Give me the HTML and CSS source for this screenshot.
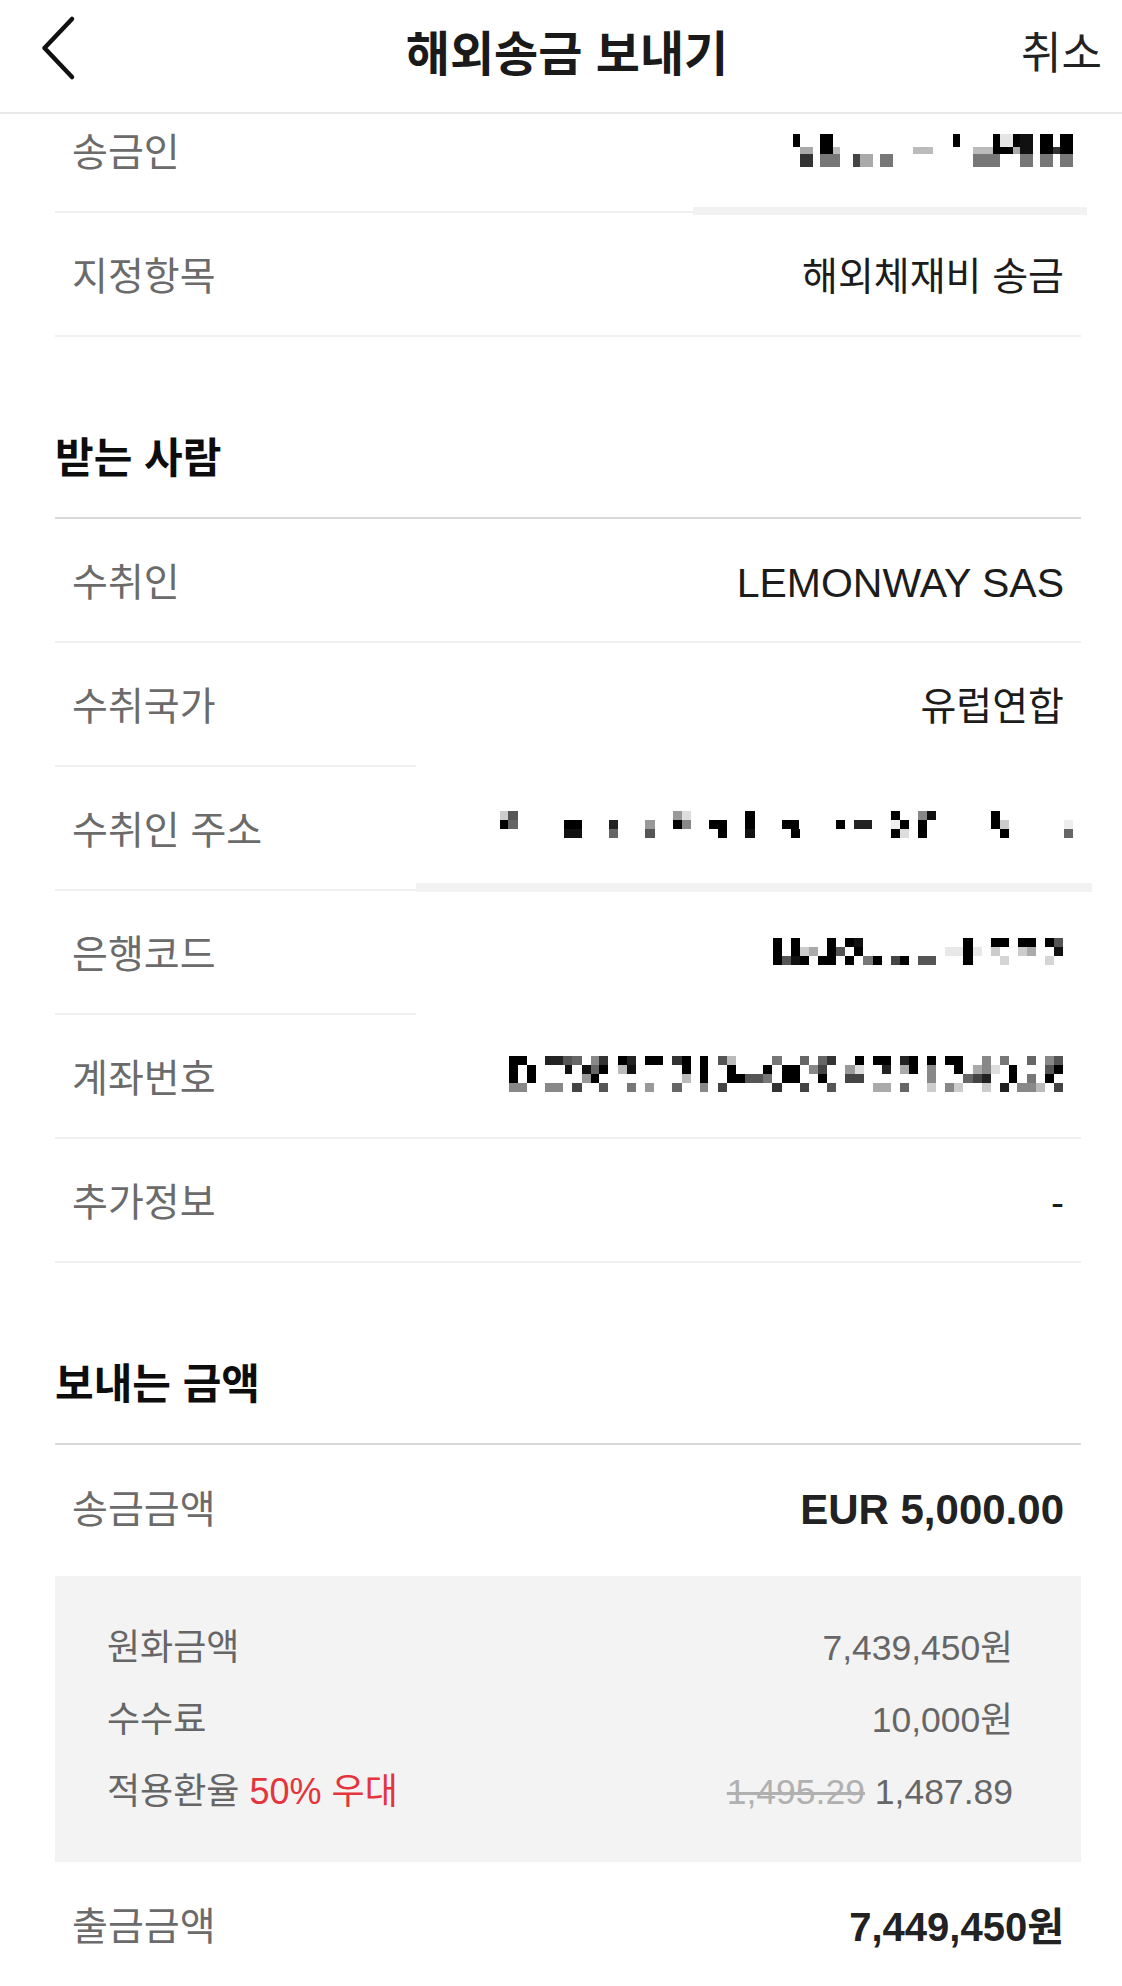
FILE: index.html
```html
<!DOCTYPE html>
<html lang="ko">
<head>
<meta charset="utf-8">
<title>해외송금 보내기</title>
<link rel="stylesheet" href="styles.css">
</head>
<body>
<header class="topbar">
  <div class="topbar-left">
    <svg class="back" width="60" height="100" viewBox="0 0 60 100" aria-label="뒤로">
      <path d="M52 19 L24.5 48 L52 77" fill="none" stroke="#111" stroke-width="4.5" stroke-linecap="round" stroke-linejoin="round"/>
    </svg>
  </div>
  <h1 class="topbar-title">해외송금 보내기</h1>
  <div class="topbar-right"><span class="cancel">취소</span></div>
</header>

<main class="content">
  <div class="list">
    <div class="row">
      <span class="label">송금인</span>
      <svg class="mosaic mosaic--sender" width="400" height="126" viewBox="690 89 400 126" shape-rendering="crispEdges">
        <rect x="693" y="207" width="394" height="8" fill="#f2f2f2"/>
        <rect x="793" y="134" width="7" height="13" fill="#000"/>
        <rect x="820" y="134" width="13" height="13" fill="#000"/>
        <rect x="953" y="134" width="7" height="13" fill="#000"/>
        <rect x="993" y="134" width="7" height="13" fill="#000"/>
        <rect x="1000" y="134" width="13" height="13" fill="#e5e5e5"/>
        <rect x="1013" y="134" width="7" height="13" fill="#000"/>
        <rect x="1020" y="134" width="13" height="13" fill="#111"/>
        <rect x="1040" y="134" width="13" height="13" fill="#000"/>
        <rect x="1060" y="134" width="13" height="13" fill="#000"/>
        <rect x="800" y="147" width="13" height="7" fill="#aaa"/>
        <rect x="820" y="147" width="13" height="7" fill="#000"/>
        <rect x="833" y="147" width="7" height="7" fill="#bbb"/>
        <rect x="913" y="147" width="20" height="7" fill="#bbb"/>
        <rect x="973" y="147" width="20" height="7" fill="#bbb"/>
        <rect x="993" y="147" width="20" height="7" fill="#000"/>
        <rect x="1013" y="147" width="7" height="7" fill="#aaa"/>
        <rect x="1020" y="147" width="13" height="7" fill="#111"/>
        <rect x="1040" y="147" width="13" height="7" fill="#000"/>
        <rect x="1053" y="147" width="7" height="7" fill="#333"/>
        <rect x="1060" y="147" width="13" height="7" fill="#000"/>
        <rect x="800" y="154" width="13" height="13" fill="#333"/>
        <rect x="820" y="154" width="20" height="13" fill="#777"/>
        <rect x="853" y="154" width="7" height="13" fill="#444"/>
        <rect x="860" y="154" width="13" height="13" fill="#aaa"/>
        <rect x="880" y="154" width="13" height="13" fill="#777"/>
        <rect x="973" y="154" width="27" height="13" fill="#777"/>
        <rect x="1020" y="154" width="13" height="13" fill="#777"/>
        <rect x="1040" y="154" width="13" height="13" fill="#777"/>
        <rect x="1060" y="154" width="13" height="13" fill="#777"/>
      </svg>
    </div>
    <div class="row">
      <span class="label">지정항목</span>
      <span class="value">해외체재비 송금</span>
    </div>

    <h2 class="section-title">받는 사람</h2>

    <div class="row">
      <span class="label">수취인</span>
      <span class="value value--latin">LEMONWAY SAS</span>
    </div>
    <div class="row row--partial">
      <span class="label">수취국가</span>
      <span class="value">유럽연합</span>
    </div>
    <div class="row row--partial">
      <span class="label">수취인 주소</span>
      <svg class="mosaic mosaic--address" width="682" height="126" viewBox="410 767 682 126" shape-rendering="crispEdges">
        <rect x="416" y="883" width="676" height="9" fill="#f2f2f2"/>
        <rect x="500" y="811" width="8" height="9" fill="#ccc"/>
        <rect x="508" y="811" width="10" height="9" fill="#555"/>
        <rect x="673" y="811" width="9" height="9" fill="#999"/>
        <rect x="682" y="811" width="9" height="9" fill="#ddd"/>
        <rect x="745" y="811" width="10" height="9" fill="#000"/>
        <rect x="891" y="811" width="9" height="9" fill="#000"/>
        <rect x="918" y="811" width="9" height="9" fill="#888"/>
        <rect x="927" y="811" width="9" height="9" fill="#111"/>
        <rect x="991" y="811" width="9" height="9" fill="#000"/>
        <rect x="500" y="820" width="8" height="9" fill="#000"/>
        <rect x="508" y="820" width="10" height="9" fill="#666"/>
        <rect x="564" y="820" width="18" height="9" fill="#000"/>
        <rect x="609" y="820" width="9" height="9" fill="#222"/>
        <rect x="645" y="820" width="10" height="9" fill="#999"/>
        <rect x="673" y="820" width="9" height="9" fill="#000"/>
        <rect x="682" y="820" width="9" height="9" fill="#888"/>
        <rect x="709" y="820" width="18" height="9" fill="#000"/>
        <rect x="745" y="820" width="10" height="9" fill="#000"/>
        <rect x="782" y="820" width="17" height="9" fill="#000"/>
        <rect x="836" y="820" width="9" height="9" fill="#000"/>
        <rect x="854" y="820" width="18" height="9" fill="#222"/>
        <rect x="891" y="820" width="9" height="9" fill="#eee"/>
        <rect x="900" y="820" width="9" height="9" fill="#000"/>
        <rect x="918" y="820" width="9" height="9" fill="#000"/>
        <rect x="991" y="820" width="9" height="9" fill="#000"/>
        <rect x="1000" y="820" width="9" height="9" fill="#ccc"/>
        <rect x="1064" y="820" width="9" height="9" fill="#eee"/>
        <rect x="564" y="829" width="18" height="9" fill="#111"/>
        <rect x="609" y="829" width="9" height="9" fill="#666"/>
        <rect x="645" y="829" width="10" height="9" fill="#555"/>
        <rect x="718" y="829" width="9" height="9" fill="#000"/>
        <rect x="745" y="829" width="10" height="9" fill="#111"/>
        <rect x="791" y="829" width="9" height="9" fill="#000"/>
        <rect x="891" y="829" width="9" height="9" fill="#000"/>
        <rect x="900" y="829" width="9" height="9" fill="#ddd"/>
        <rect x="918" y="829" width="9" height="9" fill="#000"/>
        <rect x="1000" y="829" width="9" height="9" fill="#000"/>
        <rect x="1064" y="829" width="9" height="9" fill="#666"/>
      </svg>
    </div>
    <div class="row row--partial">
      <span class="label">은행코드</span>
      <svg class="mosaic mosaic--bank" width="321" height="124" viewBox="760 891 321 124" shape-rendering="crispEdges">
        <rect x="773" y="938" width="9" height="9" fill="#000"/>
        <rect x="791" y="938" width="9" height="9" fill="#000"/>
        <rect x="827" y="938" width="9" height="9" fill="#000"/>
        <rect x="845" y="938" width="9" height="9" fill="#000"/>
        <rect x="854" y="938" width="9" height="9" fill="#111"/>
        <rect x="963" y="938" width="10" height="9" fill="#000"/>
        <rect x="991" y="938" width="18" height="9" fill="#000"/>
        <rect x="1018" y="938" width="18" height="9" fill="#000"/>
        <rect x="1045" y="938" width="9" height="9" fill="#000"/>
        <rect x="1054" y="938" width="9" height="9" fill="#555"/>
        <rect x="773" y="947" width="9" height="9" fill="#000"/>
        <rect x="791" y="947" width="9" height="9" fill="#000"/>
        <rect x="800" y="947" width="9" height="9" fill="#ccc"/>
        <rect x="809" y="947" width="9" height="9" fill="#aaa"/>
        <rect x="827" y="947" width="9" height="9" fill="#000"/>
        <rect x="836" y="947" width="9" height="9" fill="#555"/>
        <rect x="854" y="947" width="9" height="9" fill="#000"/>
        <rect x="945" y="947" width="18" height="9" fill="#e8e8e8"/>
        <rect x="963" y="947" width="10" height="9" fill="#000"/>
        <rect x="973" y="947" width="9" height="9" fill="#e8e8e8"/>
        <rect x="991" y="947" width="9" height="9" fill="#ccc"/>
        <rect x="1018" y="947" width="9" height="9" fill="#ccc"/>
        <rect x="1027" y="947" width="9" height="9" fill="#aaa"/>
        <rect x="1054" y="947" width="9" height="9" fill="#111"/>
        <rect x="773" y="956" width="9" height="9" fill="#000"/>
        <rect x="782" y="956" width="9" height="9" fill="#555"/>
        <rect x="791" y="956" width="9" height="9" fill="#111"/>
        <rect x="800" y="956" width="9" height="9" fill="#000"/>
        <rect x="818" y="956" width="18" height="9" fill="#000"/>
        <rect x="845" y="956" width="9" height="9" fill="#000"/>
        <rect x="863" y="956" width="10" height="9" fill="#777"/>
        <rect x="873" y="956" width="9" height="9" fill="#000"/>
        <rect x="891" y="956" width="9" height="9" fill="#444"/>
        <rect x="900" y="956" width="9" height="9" fill="#000"/>
        <rect x="918" y="956" width="18" height="9" fill="#555"/>
        <rect x="963" y="956" width="10" height="9" fill="#000"/>
        <rect x="1000" y="956" width="9" height="9" fill="#d5d5d5"/>
        <rect x="1045" y="956" width="9" height="9" fill="#d5d5d5"/>
      </svg>
    </div>
    <div class="row">
      <span class="label">계좌번호</span>
      <svg class="mosaic mosaic--account" width="581" height="124" viewBox="500 1015 581 124" shape-rendering="crispEdges">
        <rect x="509" y="1056" width="18" height="9" fill="#000"/>
        <rect x="545" y="1056" width="18" height="9" fill="#222"/>
        <rect x="563" y="1056" width="9" height="9" fill="#555"/>
        <rect x="572" y="1056" width="10" height="9" fill="#666"/>
        <rect x="591" y="1056" width="8" height="9" fill="#888"/>
        <rect x="599" y="1056" width="9" height="9" fill="#333"/>
        <rect x="618" y="1056" width="9" height="9" fill="#000"/>
        <rect x="627" y="1056" width="9" height="9" fill="#222"/>
        <rect x="645" y="1056" width="18" height="9" fill="#000"/>
        <rect x="672" y="1056" width="10" height="9" fill="#333"/>
        <rect x="682" y="1056" width="9" height="9" fill="#000"/>
        <rect x="700" y="1056" width="8" height="9" fill="#000"/>
        <rect x="718" y="1056" width="9" height="9" fill="#555"/>
        <rect x="727" y="1056" width="9" height="9" fill="#bbb"/>
        <rect x="772" y="1056" width="10" height="9" fill="#777"/>
        <rect x="800" y="1056" width="9" height="9" fill="#666"/>
        <rect x="818" y="1056" width="9" height="9" fill="#666"/>
        <rect x="827" y="1056" width="9" height="9" fill="#333"/>
        <rect x="855" y="1056" width="9" height="9" fill="#000"/>
        <rect x="873" y="1056" width="18" height="9" fill="#000"/>
        <rect x="900" y="1056" width="9" height="9" fill="#222"/>
        <rect x="909" y="1056" width="9" height="9" fill="#000"/>
        <rect x="927" y="1056" width="9" height="9" fill="#000"/>
        <rect x="945" y="1056" width="18" height="9" fill="#000"/>
        <rect x="982" y="1056" width="9" height="9" fill="#888"/>
        <rect x="1000" y="1056" width="9" height="9" fill="#777"/>
        <rect x="1027" y="1056" width="9" height="9" fill="#666"/>
        <rect x="1045" y="1056" width="9" height="9" fill="#888"/>
        <rect x="1054" y="1056" width="9" height="9" fill="#555"/>
        <rect x="509" y="1065" width="9" height="9" fill="#000"/>
        <rect x="527" y="1065" width="9" height="9" fill="#000"/>
        <rect x="565" y="1065" width="7" height="9" fill="#111"/>
        <rect x="582" y="1065" width="9" height="9" fill="#111"/>
        <rect x="591" y="1065" width="8" height="9" fill="#666"/>
        <rect x="599" y="1065" width="9" height="9" fill="#000"/>
        <rect x="618" y="1065" width="9" height="9" fill="#bbb"/>
        <rect x="627" y="1065" width="9" height="9" fill="#111"/>
        <rect x="682" y="1065" width="9" height="9" fill="#000"/>
        <rect x="700" y="1065" width="8" height="9" fill="#000"/>
        <rect x="727" y="1065" width="9" height="9" fill="#000"/>
        <rect x="763" y="1065" width="9" height="9" fill="#000"/>
        <rect x="782" y="1065" width="18" height="9" fill="#000"/>
        <rect x="809" y="1065" width="9" height="9" fill="#888"/>
        <rect x="818" y="1065" width="9" height="9" fill="#444"/>
        <rect x="845" y="1065" width="10" height="9" fill="#999"/>
        <rect x="855" y="1065" width="9" height="9" fill="#ddd"/>
        <rect x="882" y="1065" width="9" height="9" fill="#222"/>
        <rect x="900" y="1065" width="9" height="9" fill="#aaa"/>
        <rect x="909" y="1065" width="9" height="9" fill="#000"/>
        <rect x="927" y="1065" width="9" height="9" fill="#888"/>
        <rect x="954" y="1065" width="9" height="9" fill="#000"/>
        <rect x="973" y="1065" width="9" height="9" fill="#aaa"/>
        <rect x="982" y="1065" width="9" height="9" fill="#888"/>
        <rect x="991" y="1065" width="9" height="9" fill="#ddd"/>
        <rect x="1009" y="1065" width="8" height="9" fill="#000"/>
        <rect x="1045" y="1065" width="9" height="9" fill="#555"/>
        <rect x="1054" y="1065" width="9" height="9" fill="#000"/>
        <rect x="509" y="1074" width="9" height="9" fill="#000"/>
        <rect x="527" y="1074" width="9" height="9" fill="#000"/>
        <rect x="582" y="1074" width="9" height="9" fill="#999"/>
        <rect x="591" y="1074" width="8" height="9" fill="#000"/>
        <rect x="682" y="1074" width="9" height="9" fill="#bbb"/>
        <rect x="700" y="1074" width="8" height="9" fill="#000"/>
        <rect x="727" y="1074" width="18" height="9" fill="#000"/>
        <rect x="745" y="1074" width="18" height="9" fill="#555"/>
        <rect x="763" y="1074" width="9" height="9" fill="#777"/>
        <rect x="782" y="1074" width="18" height="9" fill="#000"/>
        <rect x="818" y="1074" width="9" height="9" fill="#000"/>
        <rect x="845" y="1074" width="19" height="9" fill="#444"/>
        <rect x="927" y="1074" width="9" height="9" fill="#888"/>
        <rect x="963" y="1074" width="10" height="9" fill="#666"/>
        <rect x="973" y="1074" width="9" height="9" fill="#444"/>
        <rect x="982" y="1074" width="9" height="9" fill="#222"/>
        <rect x="1009" y="1074" width="8" height="9" fill="#000"/>
        <rect x="1027" y="1074" width="9" height="9" fill="#777"/>
        <rect x="1045" y="1074" width="9" height="9" fill="#000"/>
        <rect x="509" y="1083" width="18" height="9" fill="#888"/>
        <rect x="545" y="1083" width="18" height="9" fill="#888"/>
        <rect x="572" y="1083" width="10" height="9" fill="#444"/>
        <rect x="599" y="1083" width="9" height="9" fill="#555"/>
        <rect x="627" y="1083" width="9" height="9" fill="#777"/>
        <rect x="645" y="1083" width="9" height="9" fill="#999"/>
        <rect x="672" y="1083" width="10" height="9" fill="#666"/>
        <rect x="700" y="1083" width="8" height="9" fill="#888"/>
        <rect x="718" y="1083" width="9" height="9" fill="#444"/>
        <rect x="772" y="1083" width="10" height="9" fill="#333"/>
        <rect x="800" y="1083" width="9" height="9" fill="#444"/>
        <rect x="827" y="1083" width="9" height="9" fill="#555"/>
        <rect x="873" y="1083" width="18" height="9" fill="#aaa"/>
        <rect x="900" y="1083" width="9" height="9" fill="#666"/>
        <rect x="927" y="1083" width="9" height="9" fill="#ccc"/>
        <rect x="945" y="1083" width="9" height="9" fill="#888"/>
        <rect x="954" y="1083" width="9" height="9" fill="#ccc"/>
        <rect x="982" y="1083" width="9" height="9" fill="#ccc"/>
        <rect x="1000" y="1083" width="9" height="9" fill="#222"/>
        <rect x="1017" y="1083" width="19" height="9" fill="#888"/>
        <rect x="1036" y="1083" width="9" height="9" fill="#bbb"/>
        <rect x="1054" y="1083" width="9" height="9" fill="#444"/>
      </svg>
    </div>
    <div class="row">
      <span class="label">추가정보</span>
      <span class="value">-</span>
    </div>

    <h2 class="section-title">보내는 금액</h2>

    <div class="row row--plain">
      <span class="label">송금금액</span>
      <span class="value value--amount">EUR 5,000.00</span>
    </div>

    <div class="breakdown">
      <div class="bd-row">
        <span class="bd-label">원화금액</span>
        <span class="bd-value">7,439,450원</span>
      </div>
      <div class="bd-row">
        <span class="bd-label">수수료</span>
        <span class="bd-value">10,000원</span>
      </div>
      <div class="bd-row">
        <span class="bd-label">적용환율 <em class="promo">50% 우대</em></span>
        <span class="bd-value"><s class="old-rate">1,495.29</s> 1,487.89</span>
      </div>
    </div>

    <div class="row row--plain">
      <span class="label">출금금액</span>
      <span class="value value--total">7,449,450원</span>
    </div>
  </div>
</main>
</body>
</html>
```

FILE: styles.css
```css
* {
  box-sizing: border-box;
  margin: 0;
  padding: 0;
}

body {
  width: 1122px;
  background: #ffffff;
  font-family: "Liberation Sans", "Noto Sans CJK KR", sans-serif;
  color: #1a1a1a;
}

.topbar {
  display: grid;
  grid-template-columns: 1fr auto 1fr;
  align-items: center;
  height: 114px;
  padding-bottom: 12px;
  border-bottom: 2px solid #e8e8e8;
  background: #ffffff;
}

.topbar-left {
  display: flex;
  align-items: center;
}

.back {
  display: block;
  margin-left: 20px;
}

.topbar-title {
  font-family: "Noto Sans CJK KR", sans-serif;
  font-weight: 700;
  font-size: 48px;
  line-height: 60px;
  color: #1a1a1a;
  padding-left: 12px;
  white-space: nowrap;
}

.topbar-right {
  display: flex;
  justify-content: flex-end;
  padding-right: 20px;
}

.cancel {
  font-family: "Noto Sans CJK KR", sans-serif;
  font-size: 44px;
  line-height: 56px;
  color: #222222;
}

.content {
  overflow: hidden;
  padding: 0 41px 0 55px;
}

.list {
  margin-top: -25px;
}

.row {
  display: flex;
  align-items: center;
  height: 124px;
  border-bottom: 2px solid #f0f0f0;
}

.row--partial {
  border-bottom-color: transparent;
  background-image: linear-gradient(#f0f0f0, #f0f0f0);
  background-repeat: no-repeat;
  background-origin: border-box;
  background-position: left bottom;
  background-size: 361px 2px;
}

.row--plain {
  border-bottom: none;
}

.label {
  padding-left: 17px;
  padding-top: 5px;
  font-size: 39px;
  line-height: 46px;
  color: #6b6b6b;
  white-space: nowrap;
}

.value {
  margin-left: auto;
  padding-right: 17px;
  padding-top: 5px;
  font-size: 39px;
  line-height: 46px;
  color: #1c1c1c;
  white-space: nowrap;
}

.value--latin {
  font-size: 41px;
}

.value--amount {
  font-weight: 700;
  font-size: 42px;
  color: #222222;
}

.value--total {
  font-weight: 700;
  font-size: 40px;
  color: #222222;
}

.mosaic {
  display: block;
  align-self: flex-start;
  margin-left: auto;
  flex: none;
}

.mosaic--sender {
  margin-right: -9px;
}

.mosaic--address {
  margin-right: -11px;
}

.section-title {
  height: 182px;
  padding-top: 96px;
  border-bottom: 2px solid #d9d9d9;
  font-family: "Noto Sans CJK KR", sans-serif;
  font-weight: 700;
  font-size: 42px;
  line-height: 44px;
  color: #0d0d0d;
}

.breakdown {
  margin-top: 7px;
  padding: 34px 68px 36px 52px;
  background: #f3f3f3;
}

.bd-row {
  display: flex;
  align-items: center;
  justify-content: space-between;
  height: 72px;
}

.bd-label {
  padding-top: 4px;
  font-size: 36px;
  line-height: 44px;
  color: #666666;
  white-space: nowrap;
}

.promo {
  font-style: normal;
  color: #e5343b;
}

.bd-value {
  padding-top: 4px;
  font-size: 35.5px;
  line-height: 44px;
  color: #666666;
  white-space: nowrap;
}

.old-rate {
  color: #b0b0b0;
  text-decoration: line-through;
}
```
